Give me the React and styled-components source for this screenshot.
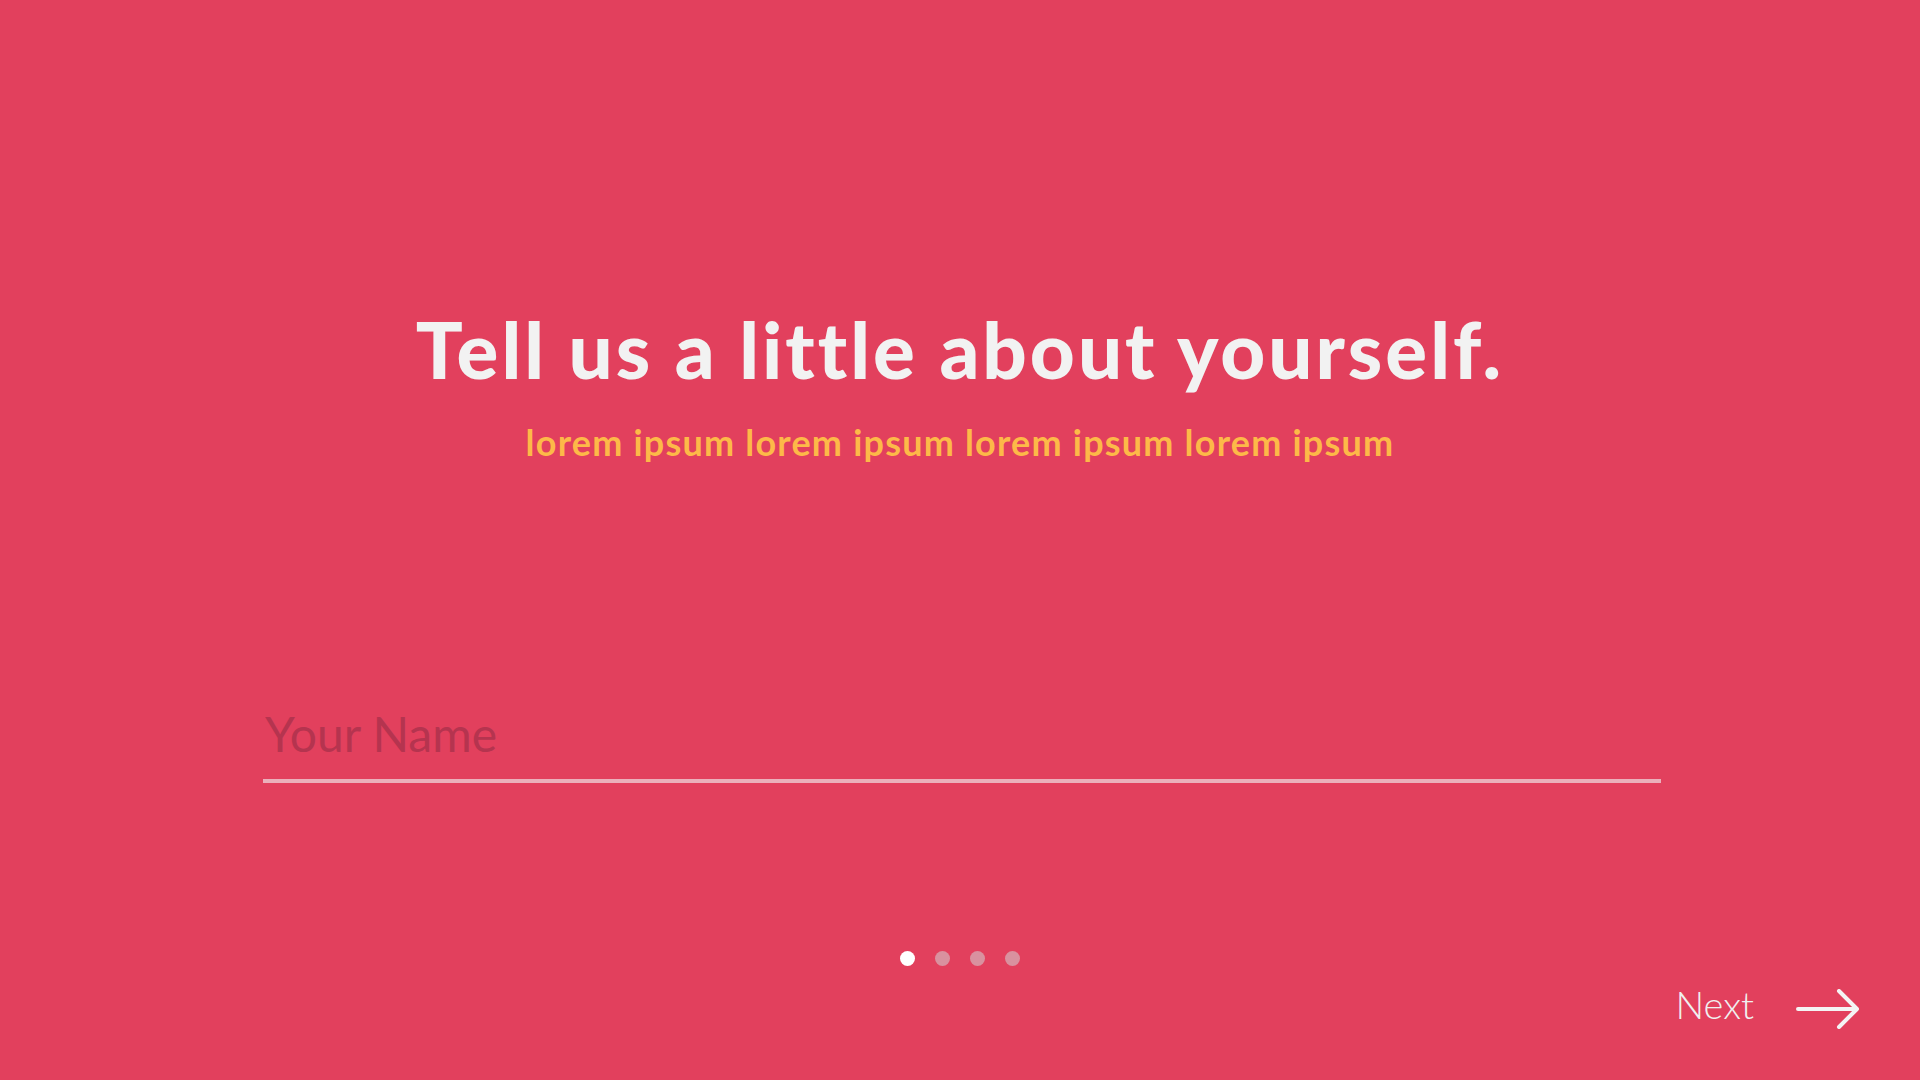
import React, { useState } from 'react'
import styled, { createGlobalStyle } from 'styled-components'

const GlobalStyle = createGlobalStyle`
    html, body {
        margin: 0;
        padding: 0;
        background: #e2405d;
    }
    * {
        box-sizing: border-box;
    }
`

const Page = styled.main`
    display: flex;
    flex-direction: column;
    align-items: center;
    height: 100vh;
    background: #e2405d;
    font-family: Lato, 'Liberation Sans', sans-serif;
    overflow: hidden;
`

const Header = styled.header`
    display: flex;
    flex-direction: column;
    align-items: center;
    padding-top: 302px;
`

const Title = styled.h1`
    margin: 0;
    color: #f2f2f2;
    font-size: 78px;
    font-weight: 900;
    line-height: 94px;
    letter-spacing: 3px;
`

const Subtitle = styled.p`
    margin: 26px 0 0;
    color: #fdb948;
    font-size: 36px;
    font-weight: 700;
    line-height: 40px;
    letter-spacing: 1.2px;
`

const Field = styled.label`
    display: block;
    width: 1398px;
    margin-top: 242px;
    margin-left: 4px;
    border-bottom: 4px solid #ebb0bb;
    padding: 0 2px 15px;
`

const NameInput = styled.input`
    width: 100%;
    border: none;
    outline: none;
    background: transparent;
    padding: 0;
    font-family: Lato, 'Liberation Sans', sans-serif;
    font-size: 48px;
    font-weight: 400;
    line-height: 60px;
    color: #f2f2f2;
    &::placeholder {
        color: #b5344f;
    }
`

const Dots = styled.nav`
    display: flex;
    gap: 20px;
    margin-top: 168px;
    margin-left: -1px;
`

const Dot = styled.button`
    width: 15px;
    height: 15px;
    padding: 0;
    border: none;
    border-radius: 50%;
    cursor: pointer;
    background: ${(p) => (p.$active ? '#ffffff' : '#d9919f')};
`

const Footer = styled.footer`
    display: flex;
    justify-content: flex-end;
    align-self: stretch;
    padding: 13px 60px 0 0;
`

const NextButton = styled.button`
    display: flex;
    align-items: center;
    gap: 42px;
    border: none;
    background: transparent;
    padding: 0;
    cursor: pointer;
    color: #f0f0f0;
    font-family: Lato, 'Liberation Sans', sans-serif;
    font-size: 38px;
    font-weight: 300;
`

const ArrowIcon = styled.svg`
    margin-top: 10px;
`

function Arrow() {
    return (
        <ArrowIcon width="64" height="40" viewBox="0 0 64 40" fill="none">
            <path
                d="M2 20 H61 M43 2 L61 20 L43 38"
                stroke="#f4f4f4"
                strokeWidth="4"
                strokeLinecap="round"
                strokeLinejoin="round"
            />
        </ArrowIcon>
    )
}

function App() {
    const [step, setStep] = useState(0)
    const [name, setName] = useState('')
    return (
        <Page>
            <GlobalStyle />
            <Header>
                <Title>Tell us a little about yourself.</Title>
                <Subtitle>
                    lorem ipsum lorem ipsum lorem ipsum lorem ipsum
                </Subtitle>
            </Header>
            <Field>
                <NameInput
                    placeholder="Your Name"
                    value={name}
                    onChange={(e) => setName(e.target.value)}
                />
            </Field>
            <Dots>
                {[0, 1, 2, 3].map((i) => (
                    <Dot key={i} $active={i === step} onClick={() => setStep(i)} />
                ))}
            </Dots>
            <Footer>
                <NextButton onClick={() => setStep((step + 1) % 4)}>
                    Next
                    <Arrow />
                </NextButton>
            </Footer>
        </Page>
    )
}

export default App
